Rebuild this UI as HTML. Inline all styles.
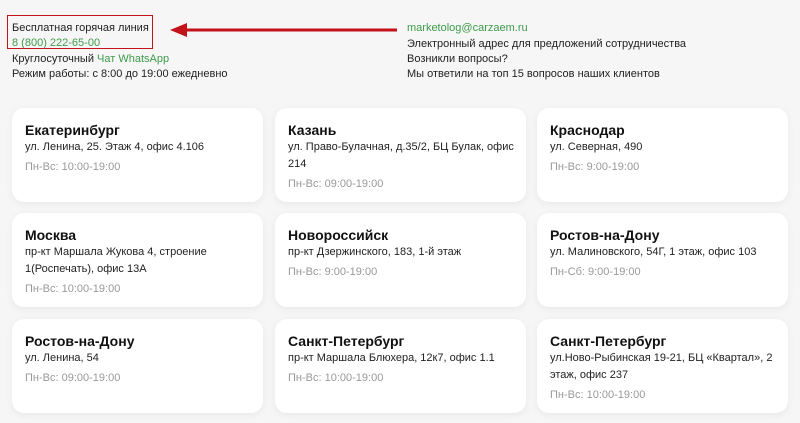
<!DOCTYPE html>
<html><head><meta charset="utf-8"><style>
body{margin:0;width:800px;height:423px;background:#f6f6f6;font-family:"Liberation Sans",sans-serif;color:#222;position:relative;overflow:hidden}
.t{position:absolute;font-size:11px;line-height:15px;white-space:nowrap}
.g{color:#3e9a4a}
.box{position:absolute;left:7px;top:15px;width:144px;height:32px;border:1.5px solid #c4121a}
.card{position:absolute;width:251px;height:94px;background:#fff;border-radius:12px;box-shadow:0 2px 8px rgba(0,0,0,.06);box-sizing:border-box;padding:13px 12px 0 13px}
.card h3{margin:0;font-size:14px;line-height:18px;font-weight:bold;color:#111}
.card p{margin:0;font-size:11px;line-height:17px;color:#222}
.card .h{color:#999;margin-top:3px}
</style></head><body>
<div class="box"></div>
<div class="t" style="left:12px;top:21px">Бесплатная горячая линия</div>
<div class="t g" style="left:12px;top:36px">8 (800) 222-65-00</div>
<div class="t" style="left:12px;top:52px">Круглосуточный <span class="g">Чат WhatsApp</span></div>
<div class="t" style="left:12px;top:67px">Режим работы: с 8:00 до 19:00 ежедневно</div>
<svg style="position:absolute;left:165px;top:22px" width="235" height="16"><line x1="232" y1="8" x2="14" y2="8" stroke="#c4121a" stroke-width="3"/><polygon points="5,8 22,1 22,15" fill="#c4121a"/></svg>
<div class="t g" style="left:407px;top:21px">marketolog@carzaem.ru</div>
<div class="t" style="left:407px;top:37px">Электронный адрес для предложений сотрудничества</div>
<div class="t" style="left:407px;top:52px">Возникли вопросы?</div>
<div class="t" style="left:407px;top:67px">Мы ответили на топ 15 вопросов наших клиентов</div>

<div class="card" style="left:12px;top:108px"><h3>Екатеринбург</h3><p>ул. Ленина, 25. Этаж 4, офис 4.106</p><p class="h">Пн-Вс: 10:00-19:00</p></div>
<div class="card" style="left:275px;top:108px"><h3>Казань</h3><p>ул. Право-Булачная, д.35/2, БЦ Булак, офис 214</p><p class="h">Пн-Вс: 09:00-19:00</p></div>
<div class="card" style="left:537px;top:108px"><h3>Краснодар</h3><p>ул. Северная, 490</p><p class="h">Пн-Вс: 9:00-19:00</p></div>

<div class="card" style="left:12px;top:213px"><h3>Москва</h3><p>пр-кт Маршала Жукова 4, строение 1(Роспечать), офис 13А</p><p class="h">Пн-Вс: 10:00-19:00</p></div>
<div class="card" style="left:275px;top:213px"><h3>Новороссийск</h3><p>пр-кт Дзержинского, 183, 1-й этаж</p><p class="h">Пн-Вс: 9:00-19:00</p></div>
<div class="card" style="left:537px;top:213px"><h3>Ростов-на-Дону</h3><p>ул. Малиновского, 54Г, 1 этаж, офис 103</p><p class="h">Пн-Сб: 9:00-19:00</p></div>

<div class="card" style="left:12px;top:319px"><h3>Ростов-на-Дону</h3><p>ул. Ленина, 54</p><p class="h">Пн-Вс: 09:00-19:00</p></div>
<div class="card" style="left:275px;top:319px"><h3>Санкт-Петербург</h3><p>пр-кт Маршала Блюхера, 12к7, офис 1.1</p><p class="h">Пн-Вс: 10:00-19:00</p></div>
<div class="card" style="left:537px;top:319px"><h3>Санкт-Петербург</h3><p>ул.Ново-Рыбинская 19-21, БЦ «Квартал», 2 этаж, офис 237</p><p class="h">Пн-Вс: 10:00-19:00</p></div>
</body></html>
